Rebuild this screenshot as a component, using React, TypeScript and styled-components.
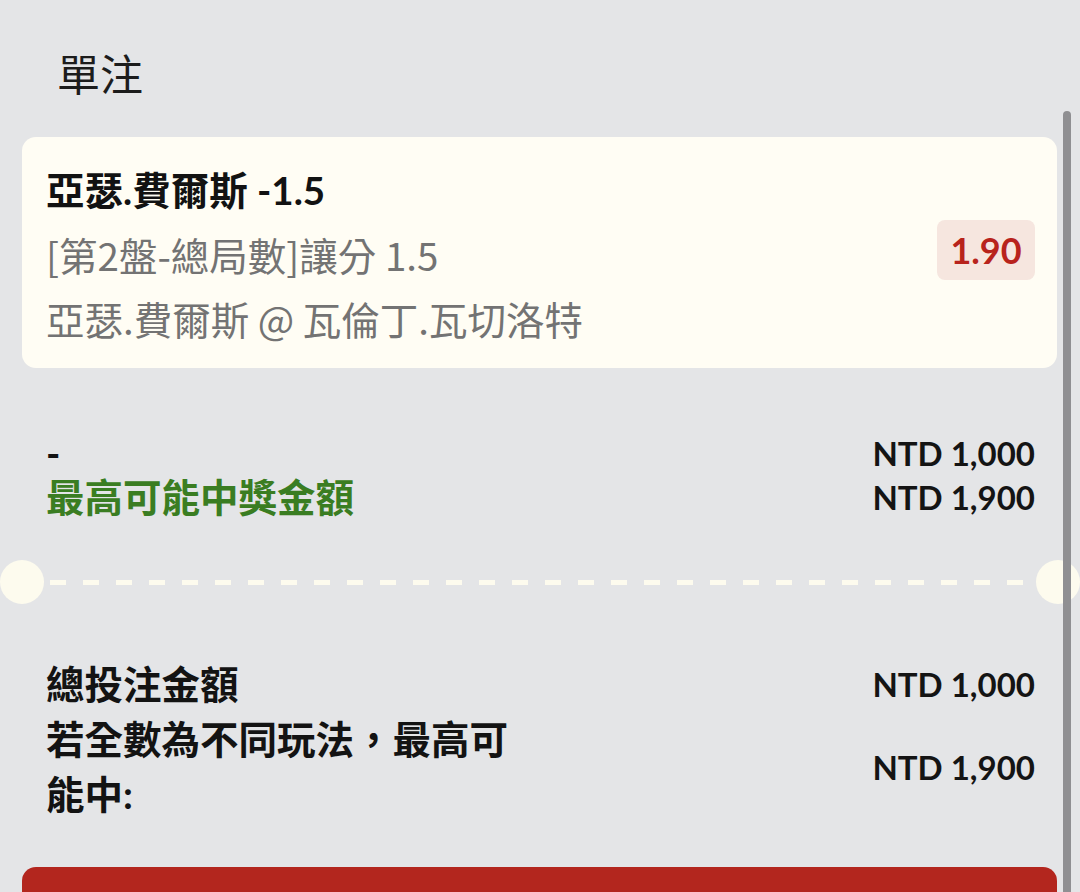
import React from 'react';
import styled, { createGlobalStyle } from 'styled-components';

const GlobalStyle = createGlobalStyle`
  html, body {
    margin: 0;
    padding: 0;
    background: #e4e5e7;
    overflow: hidden;
  }
  body {
    font-family: Lato, 'Noto Sans CJK TC', sans-serif;
    color: #111;
  }
`;

const Page = styled.div`
  position: relative;
  width: 1080px;
  height: 892px;
  overflow: hidden;
  background: #e4e5e7;
`;

const Header = styled.div`
  height: 137px;
  padding: 44px 0 0 57px;
  box-sizing: border-box;
  font-size: 43px;
  line-height: 56px;
  font-family: 'Noto Sans CJK TC', sans-serif;
  color: #1c1c1c;
`;

const BetCard = styled.div`
  margin: 0 23px 0 22px;
  background: #fffdf4;
  border-radius: 14px;
  padding: 21px 22px 18px 24px;
  display: flex;
  align-items: center;
  justify-content: space-between;
`;

const BetInfo = styled.div`
  display: flex;
  flex-direction: column;
`;

const Line = styled.div<{ bold?: boolean }>`
  font-size: 38.5px;
  line-height: 64px;
  font-weight: ${p => (p.bold ? 700 : 400)};
  color: ${p => (p.bold ? '#121212' : '#737373')};
  font-family: ${p => (p.bold ? "Lato, 'Noto Sans CJK TC', sans-serif" : "'Noto Sans CJK TC', sans-serif")};
  white-space: nowrap;
`;

const OddsBadge = styled.div`
  background: #f6e6df;
  color: #b8231c;
  font-size: 36px;
  font-weight: 700;
  height: 60px;
  width: 98px;
  border-radius: 8px;
  display: flex;
  align-items: center;
  justify-content: center;
  margin-top: -8px;
`;

const Section = styled.div`
  padding: 0 45px 0 46px;
  display: flex;
  flex-direction: column;
`;

const Row = styled.div<{ lh?: number }>`
  display: flex;
  justify-content: space-between;
  align-items: center;
  font-size: 38.5px;
  font-weight: 700;
  line-height: ${p => p.lh ?? 44}px;
`;

const Label = styled.div<{ green?: boolean }>`
  color: ${p => (p.green ? '#3a7d22' : '#131313')};
  max-width: 490px;
`;

const Amount = styled.div`
  font-size: 33px;
  font-weight: 700;
  color: #141414;
  white-space: nowrap;
`;

const Divider = styled.div`
  display: flex;
  align-items: center;
  margin: 41px 0 0 0;
  height: 44px;
`;

const Notch = styled.div`
  width: 44px;
  height: 44px;
  border-radius: 50%;
  background: #fdfbee;
  flex: none;
`;

const Dashes = styled.div`
  flex: 1;
  height: 5px;
  margin: 0 8px 0 6px;
  background: repeating-linear-gradient(
    to right,
    #fdfbee 0 16px,
    transparent 16px 33px
  );
`;

const SubmitBar = styled.div`
  margin: 0 23px 0 22px;
  height: 80px;
  background: #b3261e;
  border-radius: 14px 14px 0 0;
`;

const Scrollbar = styled.div`
  position: absolute;
  top: 111px;
  right: 9px;
  width: 8px;
  height: 800px;
  border-radius: 4px;
  background: #8f8f92;
`;

const App: React.FC = () => {
  return (
    <Page>
      <GlobalStyle />
      <Header>單注</Header>
      <BetCard>
        <BetInfo>
          <Line bold>亞瑟.費爾斯 -1.5</Line>
          <Line>[第2盤-總局數]讓分 1.5</Line>
          <Line>亞瑟.費爾斯 @ 瓦倫丁.瓦切洛特</Line>
        </BetInfo>
        <OddsBadge>1.90</OddsBadge>
      </BetCard>

      <Section style={{ marginTop: 63 }}>
        <Row>
          <Label>-</Label>
          <Amount>NTD 1,000</Amount>
        </Row>
        <Row>
          <Label green>最高可能中獎金額</Label>
          <Amount>NTD 1,900</Amount>
        </Row>
      </Section>

      <Divider>
        <Notch />
        <Dashes />
        <Notch />
      </Divider>

      <Section style={{ marginTop: 58 }}>
        <Row>
          <Label>總投注金額</Label>
          <Amount>NTD 1,000</Amount>
        </Row>
        <Row lh={55} style={{ marginTop: 6 }}>
          <Label>若全數為不同玩法，最高可能中:</Label>
          <Amount>NTD 1,900</Amount>
        </Row>
      </Section>

      <SubmitBar style={{ marginTop: 45 }} />
      <Scrollbar />
    </Page>
  );
};

export default App;
